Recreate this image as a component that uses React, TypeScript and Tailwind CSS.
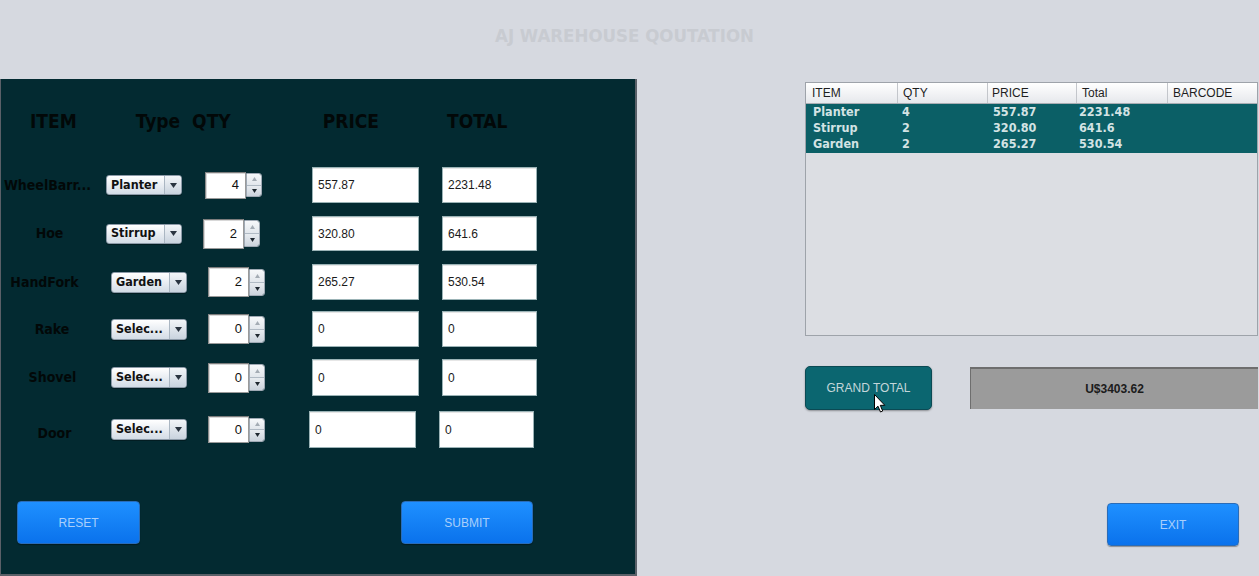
import React from "react";

const TAHOMA = "font-['DejaVu_Sans_Condensed','DejaVu_Sans',sans-serif] [font-stretch:condensed]";
const ARIAL = "font-['Liberation_Sans',Arial,sans-serif]";

type RowProps = {
  h: string;
  labelCls: string;
  name: string;
  comboCls: string;
  type: string;
  spinCls: string;
  spinH: string;
  qty: string;
  priceCls: string;
  priceH: string;
  price: string;
  totalCls: string;
  total: string;
};

function Combo({ cls, text }: { cls: string; text: string }) {
  return (
    <div
      className={`${cls} w-[76px] flex items-stretch rounded-[3px] border border-[#8c9aa8] bg-gradient-to-b from-[#ffffff] to-[#d3dce6] shadow-[0_1px_0_rgba(0,0,0,0.3)]`}
    >
      <div className={`flex-1 flex items-center pl-[4px] text-[12.5px] font-bold text-[#111] leading-none ${TAHOMA}`}>
        {text}
      </div>
      <div className="w-[17px] border-l border-[#aab6c2] flex items-center justify-center bg-gradient-to-b from-[#f2f5f8] to-[#c9d3de] rounded-r-[3px]">
        <svg width="7" height="5" viewBox="0 0 7 5">
          <path d="M0 0 L7 0 L3.5 5 Z" fill="#2a3440" />
        </svg>
      </div>
    </div>
  );
}

function Spinner({ cls, h, qty }: { cls: string; h: string; qty: string }) {
  return (
    <div className={`${cls} ${h} flex items-center`}>
      <div
        className={`w-[41px] h-full bg-white border border-[#9a9a9a] border-t-[#7c7c7c] border-l-[#8a8a8a] shadow-[inset_1px_1px_0_#d8d8d8] flex items-center justify-end pr-[6px] text-[13px] text-[#111] ${ARIAL}`}
      >
        {qty}
      </div>
      <div className="w-[16px] h-[calc(100%-3px)] flex flex-col border border-[#9fa9b4] rounded-r-[3px] overflow-hidden">
        <div className="flex-1 flex items-center justify-center bg-gradient-to-b from-[#f6f8fa] to-[#e2e7ec] border-b border-[#b0bac4]">
          <svg width="5" height="4" viewBox="0 0 5 4">
            <path d="M0 4 L5 4 L2.5 0 Z" fill="#a4acb4" />
          </svg>
        </div>
        <div className="flex-1 flex items-center justify-center bg-gradient-to-b from-[#e8ecf0] to-[#cbd3dc]">
          <svg width="5" height="4" viewBox="0 0 5 4">
            <path d="M0 0 L5 0 L2.5 4 Z" fill="#1f2830" />
          </svg>
        </div>
      </div>
    </div>
  );
}

function Field({ cls, h, w, text }: { cls: string; h: string; w: string; text: string }) {
  return (
    <div
      className={`${cls} ${h} ${w} bg-white border border-[#9bb3b6] shadow-[inset_0_1px_0_#e6e6e6] flex items-center pl-[5px] text-[12px] text-[#1a1a1a] ${ARIAL}`}
    >
      {text}
    </div>
  );
}

function Row(p: RowProps) {
  return (
    <div className={`${p.h} flex items-center shrink-0`}>
      <div className={`${p.labelCls} text-center text-[14px] font-bold text-[#020808] whitespace-nowrap ${TAHOMA}`}>
        {p.name}
      </div>
      <Combo cls={p.comboCls} text={p.type} />
      <Spinner cls={p.spinCls} h={p.spinH} qty={p.qty} />
      <Field cls={p.priceCls} h={p.priceH} w="w-[107px]" text={p.price} />
      <Field cls={p.totalCls} h={p.priceH} w="w-[95px]" text={p.total} />
    </div>
  );
}

function BlueButton({ cls, text }: { cls: string; text: string }) {
  return (
    <div
      className={`${cls} h-[43px] rounded-[4px] border border-[#2a6cb8] bg-gradient-to-b from-[#1f90ff] to-[#0a72ec] shadow-[0_1px_1px_rgba(0,0,0,0.35)] flex items-center justify-center text-[12px] text-[#a9cffb] ${ARIAL}`}
    >
      {text}
    </div>
  );
}

const tableRows = [
  { item: "Planter", qty: "4", price: "557.87", total: "2231.48" },
  { item: "Stirrup", qty: "2", price: "320.80", total: "641.6" },
  { item: "Garden", qty: "2", price: "265.27", total: "530.54" },
];

export default function App() {
  return (
    <div className="w-[1259px] h-[576px] bg-[#d6d9e0] flex flex-col overflow-hidden">
      {/* Title */}
      <div className="h-[79px] shrink-0 flex items-center justify-center pr-[10px] pb-[7px]">
        <div className={`text-[18.5px] font-bold text-[#c8cbd1] ${TAHOMA}`}>AJ WAREHOUSE QOUTATION</div>
      </div>

      <div className="flex flex-1 min-h-0">
        {/* Left panel */}
        <div className="w-[637px] h-[497px] shrink-0 bg-[#032a31] border-l border-r-2 border-b-2 border-[#5a6068] flex flex-col">
          {/* Header */}
          <div className={`mt-[29px] h-[26px] shrink-0 flex items-center text-[19px] font-bold text-[#020808] ${TAHOMA}`}>
            <div className="ml-[29px]">ITEM</div>
            <div className="ml-[59px]">Type</div>
            <div className="ml-[12px]">QTY</div>
            <div className="ml-[92px]">PRICE</div>
            <div className="ml-[68px]">TOTAL</div>
          </div>

          <div className="mt-[27px]" />
          <Row
            h="h-[48px]"
            labelCls="w-[93px]"
            name="WheelBarr..."
            comboCls="ml-[12px] h-[20px]"
            type="Planter"
            spinCls="ml-[23px]"
            spinH="h-[27px]"
            qty="4"
            priceCls="ml-[50px]"
            priceH="h-[36px]"
            price="557.87"
            totalCls="ml-[23px]"
            total="2231.48"
          />
          <Row
            h="h-[49px]"
            labelCls="w-[97px]"
            name="Hoe"
            comboCls="ml-[8px] h-[20px]"
            type="Stirrup"
            spinCls="ml-[21px]"
            spinH="h-[30px]"
            qty="2"
            priceCls="ml-[52px]"
            priceH="h-[35px]"
            price="320.80"
            totalCls="ml-[23px]"
            total="641.6"
          />
          <Row
            h="h-[48px]"
            labelCls="w-[87px]"
            name="HandFork"
            comboCls="ml-[23px] h-[21px]"
            type="Garden"
            spinCls="ml-[21px]"
            spinH="h-[30px]"
            qty="2"
            priceCls="ml-[47px]"
            priceH="h-[36px]"
            price="265.27"
            totalCls="ml-[23px]"
            total="530.54"
          />
          <Row
            h="h-[46px]"
            labelCls="w-[102px]"
            name="Rake"
            comboCls="ml-[8px] h-[21px]"
            type="Selec..."
            spinCls="ml-[21px]"
            spinH="h-[30px]"
            qty="0"
            priceCls="ml-[47px]"
            priceH="h-[36px]"
            price="0"
            totalCls="ml-[23px]"
            total="0"
          />
          <Row
            h="h-[51px]"
            labelCls="w-[103px]"
            name="Shovel"
            comboCls="ml-[7px] h-[21px]"
            type="Selec..."
            spinCls="ml-[21px]"
            spinH="h-[30px]"
            qty="0"
            priceCls="ml-[47px]"
            priceH="h-[37px]"
            price="0"
            totalCls="ml-[23px]"
            total="0"
          />
          <Row
            h="h-[53px]"
            labelCls="w-[107px] mt-[7px]"
            name="Door"
            comboCls="ml-[3px] h-[21px]"
            type="Selec..."
            spinCls="ml-[21px]"
            spinH="h-[27px]"
            qty="0"
            priceCls="ml-[44px]"
            priceH="h-[37px]"
            price="0"
            totalCls="ml-[23px]"
            total="0"
          />

          <div className="mt-[45px] flex">
            <BlueButton cls="ml-[16px] w-[123px]" text="RESET" />
            <BlueButton cls="ml-[261px] w-[132px]" text="SUBMIT" />
          </div>
        </div>

        {/* Right column */}
        <div className="ml-[168px] w-[453px] flex flex-col">
          {/* Table */}
          <div className="mt-[3px] h-[254px] border border-[#9ea3aa] bg-[#dcdee3] flex flex-col">
            <div
              className={`h-[21px] shrink-0 grid grid-cols-[92px_90px_89px_91px_1fr] bg-gradient-to-b from-[#ffffff] to-[#e6e8ec] border-b border-[#a9adb3] text-[12px] text-[#1e1e1e] ${ARIAL}`}
            >
              <div className="pl-[6px] flex items-center border-r border-[#c3c6cb]">ITEM</div>
              <div className="pl-[5px] flex items-center border-r border-[#c3c6cb]">QTY</div>
              <div className="pl-[4px] flex items-center border-r border-[#c3c6cb]">PRICE</div>
              <div className="pl-[5px] flex items-center border-r border-[#c3c6cb]">Total</div>
              <div className="pl-[5px] flex items-center">BARCODE</div>
            </div>
            <div className={`bg-[#0b5f66] pb-[1px] ${TAHOMA}`}>
              {tableRows.map((r) => (
                <div
                  key={r.item}
                  className="h-[16px] grid grid-cols-[92px_90px_89px_91px_1fr] text-[12.5px] font-bold text-[#d3e3e4] leading-[16px]"
                >
                  <div className="pl-[7px]">{r.item}</div>
                  <div className="pl-[4px]">{r.qty}</div>
                  <div className="pl-[5px]">{r.price}</div>
                  <div className="pl-[2px]">{r.total}</div>
                  <div />
                </div>
              ))}
            </div>
          </div>

          {/* Grand total row */}
          <div className="mt-[30px] flex items-start">
            <div
              className={`relative w-[127px] h-[44px] rounded-[5px] border border-[#0b4a54] bg-[#0b6670] shadow-[0_1px_2px_rgba(0,0,0,0.35)] flex items-center justify-center text-[12px] text-[#c3d6da] ${ARIAL}`}
            >
              GRAND TOTAL
              <svg className="absolute left-[68px] top-[27px]" width="12" height="19" viewBox="0 0 12 19">
                <path
                  d="M0.5 0.5 L0.5 15.5 L4 12.2 L6.5 18 L8.7 17 L6.3 11.3 L10.8 11.3 Z"
                  fill="#ffffff"
                  stroke="#000000"
                  strokeWidth="1"
                  strokeLinejoin="round"
                />
              </svg>
            </div>
            <div
              className={`ml-[38px] mt-[1px] w-[288px] h-[42px] bg-[#9b9b9b] border-t-2 border-l border-[#6e6e6e] flex items-center justify-center text-[12px] font-bold text-[#1c1c1c] ${ARIAL}`}
            >
              U$3403.62
            </div>
          </div>

          <div className="mt-[93px] flex">
            <BlueButton cls="ml-[302px] w-[132px]" text="EXIT" />
          </div>
        </div>
      </div>
    </div>
  );
}
